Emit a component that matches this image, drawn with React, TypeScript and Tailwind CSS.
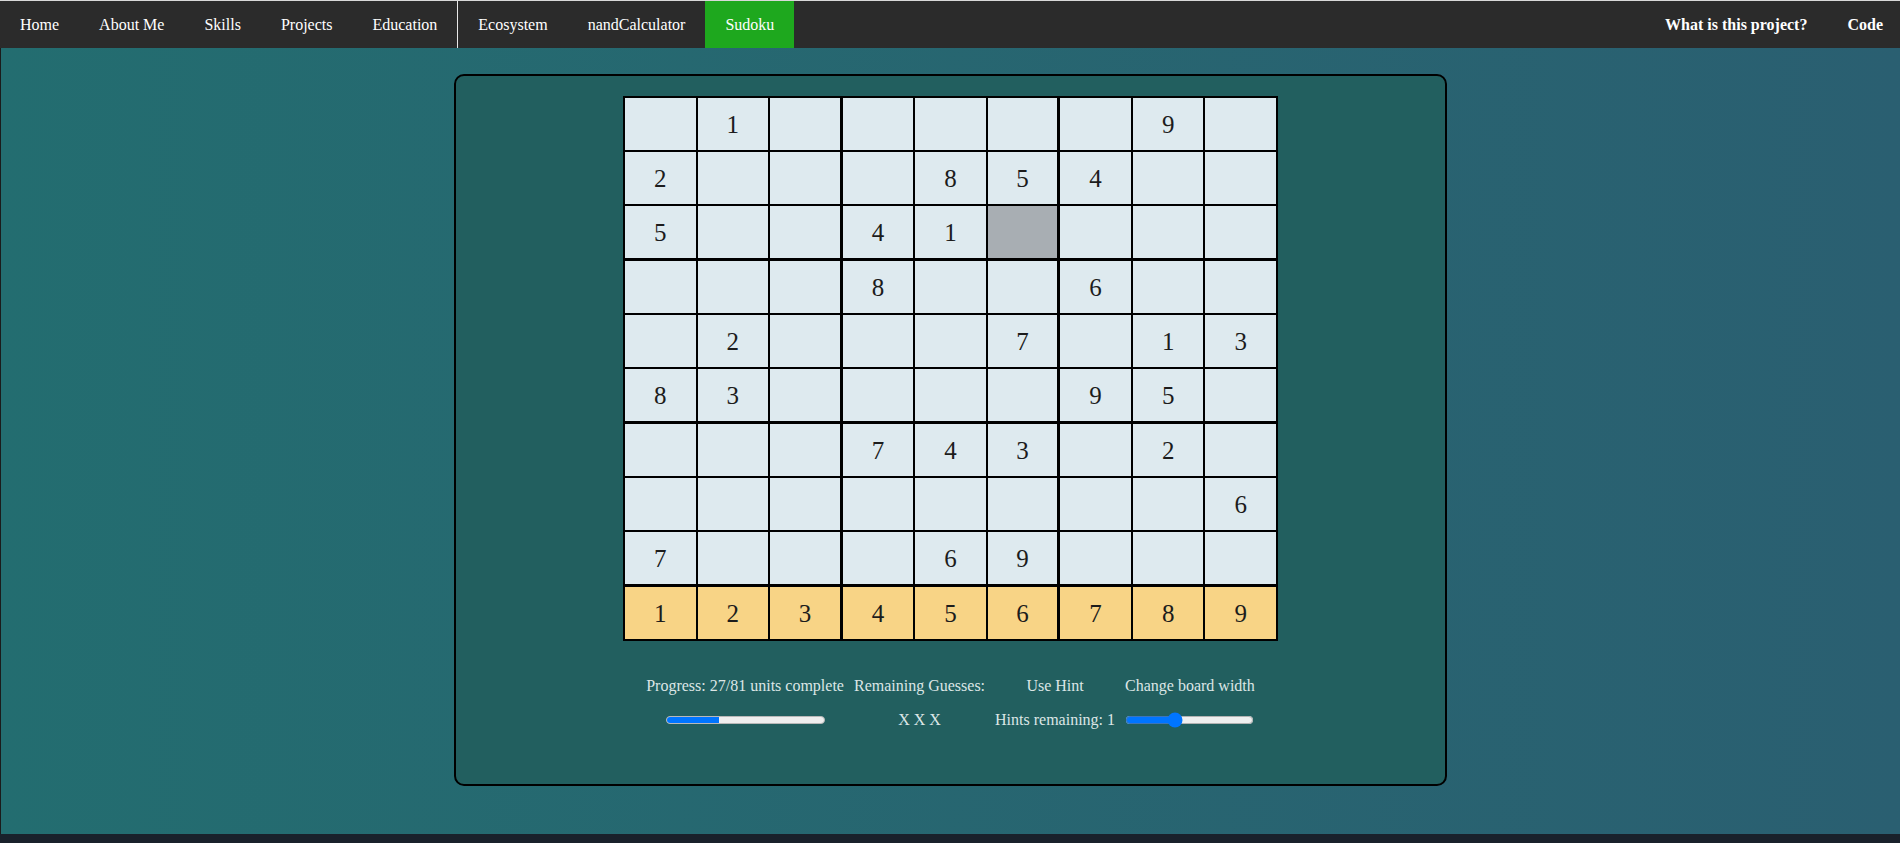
import React from 'react';

const serif = { fontFamily: '"Liberation Serif", "Times New Roman", serif' };

const board: (number | null)[][] = [
  [null, 1, null, null, null, null, null, 9, null],
  [2, null, null, null, 8, 5, 4, null, null],
  [5, null, null, 4, 1, null, null, null, null],
  [null, null, null, 8, null, null, 6, null, null],
  [null, 2, null, null, null, 7, null, 1, 3],
  [8, 3, null, null, null, null, 9, 5, null],
  [null, null, null, 7, 4, 3, null, 2, null],
  [null, null, null, null, null, null, null, null, 6],
  [7, null, null, null, 6, 9, null, null, null],
];

const leftLinks = ['Home', 'About Me', 'Skills', 'Projects', 'Education'];
const projectLinks = ['Ecosystem', 'nandCalculator'];

function Cell({ value, row, col }: { value: number | null; row: number; col: number }) {
  const boxRight = col === 2 || col === 5;
  const boxBottom = row === 2 || row === 5 || row === 8;
  const picker = row === 9;
  const selected = row === 2 && col === 5;
  return (
    <div
      className={`flex items-center justify-center border border-black text-[25px] leading-none text-[#1c1c1c] ${
        boxRight ? 'border-r-2' : ''
      } ${boxBottom ? 'border-b-2 h-[55px]' : 'h-[54px]'} ${
        picker ? 'bg-[#f8d486] cursor-pointer' : selected ? 'bg-[#a8aeb3]' : 'bg-[#deeaef]'
      }`}
    >
      {value ?? ''}
    </div>
  );
}

function ProgressBar({ value, max }: { value: number; max: number }) {
  const pct = (value / max) * 100;
  return (
    <div className="h-[8px] w-[159px] overflow-hidden rounded-full border border-[#b8b8b8] bg-[#efefef]">
      <div className="h-full bg-[#0075ff]" style={{ width: `${pct}%` }} />
    </div>
  );
}

export default function App() {
  const rows = [...board, [1, 2, 3, 4, 5, 6, 7, 8, 9]];

  return (
    <div style={serif} className="min-h-screen bg-[#19212b]">
      {/* Top nav */}
      <nav className="flex h-[48px] items-stretch border-t border-[#d9d9d9] bg-[#2b2b2b] text-[16px] text-white">
        {leftLinks.map(l => (
          <a key={l} className="flex items-center px-5 hover:bg-[#444]">{l}</a>
        ))}
        <div className="flex items-stretch border-l border-[#e8e8e8]">
          {projectLinks.map(l => (
            <a key={l} className="flex items-center px-5 hover:bg-[#444]">{l}</a>
          ))}
          <a className="flex items-center bg-[#1ea81e] px-5">Sudoku</a>
        </div>
        <div className="ml-auto flex items-stretch font-bold">
          <a className="flex items-center px-5">What is this project?</a>
          <a className="flex items-center pl-5 pr-[17px]">Code</a>
        </div>
      </nav>

      {/* Main */}
      <main className="h-[786px] border-l border-[#1b1b1b] bg-gradient-to-r from-[#236d70] to-[#2a5f71] pt-[26px]">
        <div className="mx-auto flex h-[712px] w-[993px] flex-col items-center rounded-[10px] border-2 border-black bg-[#225f5f] pt-5">
          <div className="grid w-[655px] grid-cols-9 border border-black">
            {rows.map((r, ri) =>
              r.map((v, ci) => <Cell key={`${ri}-${ci}`} value={v} row={ri} col={ci} />)
            )}
          </div>

          {/* Controls */}
          <div className="mt-9 flex gap-[10px] text-[16px] leading-[18px] text-[#dce6e6]">
            <div className="flex flex-col items-center gap-4">
              <span>Progress: 27/81 units complete</span>
              <div className="flex h-[18px] items-center">
                <ProgressBar value={27} max={81} />
              </div>
            </div>
            <div className="flex flex-col items-center gap-4">
              <span>Remaining Guesses:</span>
              <div className="flex h-[18px] items-center">X X X</div>
            </div>
            <div className="flex flex-col items-center gap-4">
              <span className="cursor-pointer">Use Hint</span>
              <div className="flex h-[18px] items-center">Hints remaining: 1</div>
            </div>
            <div className="flex flex-col items-center gap-4">
              <span>Change board width</span>
              <div className="flex h-[18px] items-center">
                <input type="range" min={0} max={100} defaultValue={37} />
              </div>
            </div>
          </div>
        </div>
      </main>
      <footer className="h-[40px] bg-[#19212b]" />
    </div>
  );
}
